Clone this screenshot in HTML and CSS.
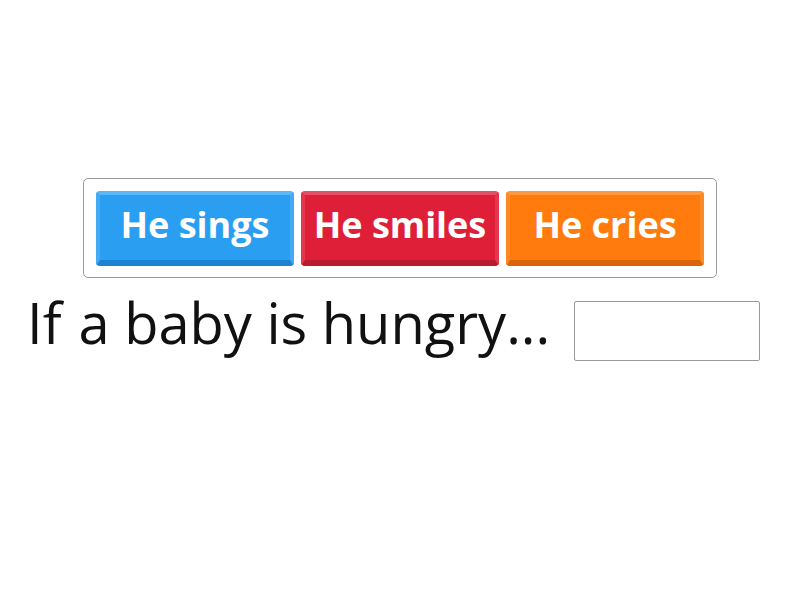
FILE: index.html
```html
<!DOCTYPE html>
<html>
<head>
<meta charset="utf-8">
<link rel="stylesheet" href="styles.css">
</head>
<body>
<main class="page">
  <div class="choices">
    <div class="tile tile-blue">He sings</div>
    <div class="tile tile-red">He smiles</div>
    <div class="tile tile-orange">He cries</div>
  </div>
  <div class="sentence">
    <span class="word-if">If</span>
    <span class="text">a baby is hungry...</span>
    <span class="blank"></span>
  </div>
</main>
</body>
</html>
```
FILE: styles.css
```css
html, body {
  margin: 0;
  padding: 0;
  background: #ffffff;
}
body {
  width: 800px;
  height: 600px;
  font-family: "Open Sans", "DejaVu Sans", sans-serif;
}
.page {
  padding-top: 178px;
}
.choices {
  box-sizing: border-box;
  width: 634px;
  height: 100px;
  margin: 0 auto 0 83px;
  border: 1px solid #9a9a9a;
  border-radius: 5px;
  padding: 12px 11px 10px 12px;
  display: flex;
  gap: 7px;
}
.tile {
  box-sizing: border-box;
  width: 198px;
  height: 75px;
  border-radius: 4px;
  display: flex;
  align-items: center;
  justify-content: center;
  color: #ffffff;
  font-size: 36px;
  font-weight: 700;
  border-style: solid;
  border-width: 4px 4px 6px 4px;
  padding-bottom: 6px;
}
.tile-blue {
  background: #2a9ef1;
  border-color: #5bb7f5 #43abf3 #1c82d4 #43abf3;
}
.tile-red {
  background: #df1f37;
  border-color: #e65066 #e2374d #b81a2e #e2374d;
}
.tile-orange {
  background: #ff7b0e;
  border-color: #ff9940 #ff8a25 #d9640a #ff8a25;
}
.sentence {
  display: flex;
  align-items: flex-start;
  padding-left: 27px;
  margin-top: 6px;
  color: #111111;
  font-size: 56px;
  line-height: 76px;
}
.word-if {
  margin-right: 17px;
}
.blank {
  box-sizing: border-box;
  width: 186px;
  height: 60px;
  border: 1px solid #9a9a9a;
  border-radius: 2px;
  margin-left: 24px;
  margin-top: 17px;
}
```
